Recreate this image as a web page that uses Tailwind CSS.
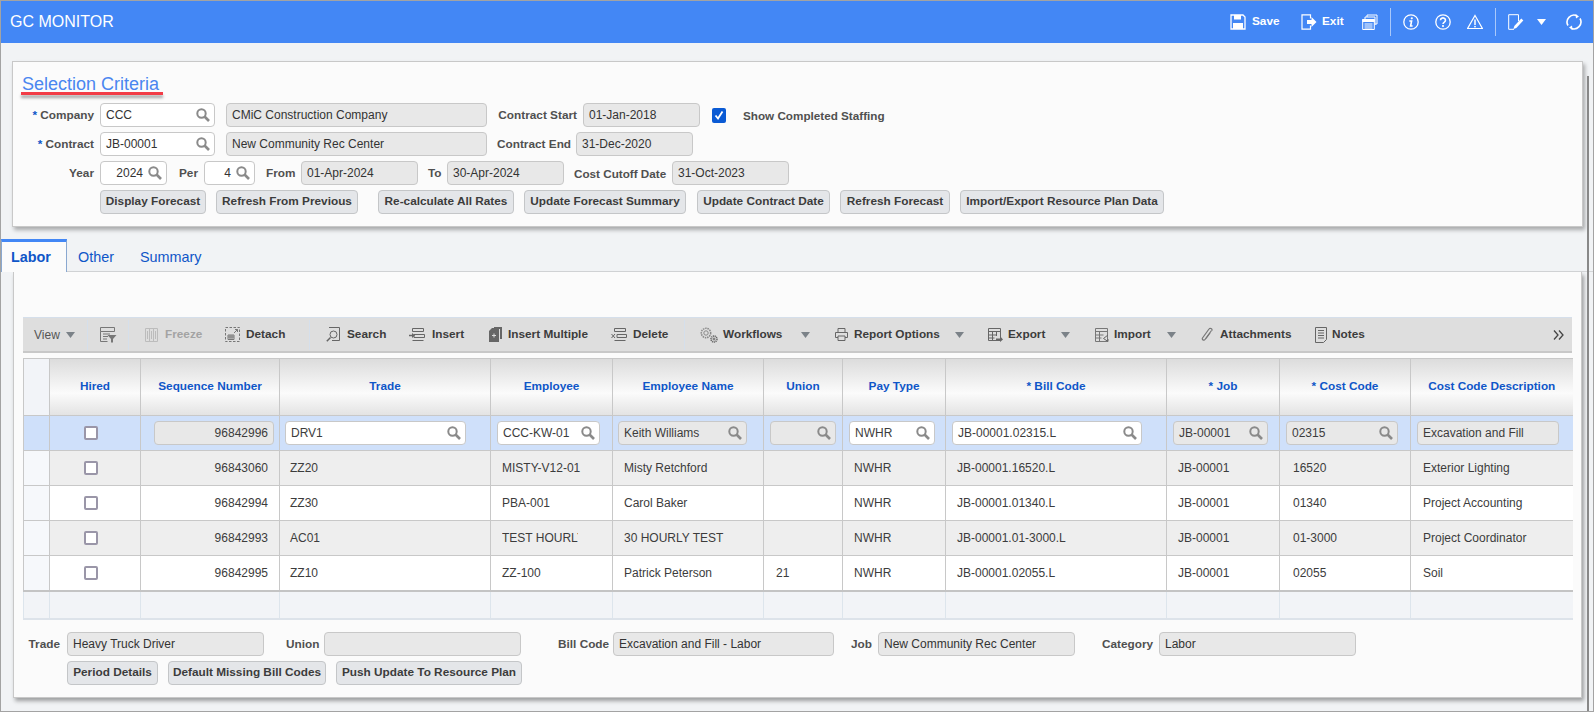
<!DOCTYPE html>
<html lang="en">
<head>
  <meta charset="UTF-8">
  <title>GC Monitor</title>
  <script src="https://cdn.jsdelivr.net/npm/@tailwindcss/browser@4"></script>
</head>
<body class="bg-[#f1f3f5]">
  <svg class="hidden">
    <symbol id="mag" viewBox="0 0 14 14"><circle cx="5.5" cy="5.5" r="4.2" fill="none" stroke="currentColor" stroke-width="2"/><path d="M8.500 8.500l4.500 4.500" stroke="currentColor" stroke-width="2.600"/></symbol>
    <symbol id="caret" viewBox="0 0 9 6"><path d="M0 0h9L4.500 6z" fill="currentColor"/></symbol>
  </svg>

  <div class="relative w-[1594px] h-[712px] overflow-hidden border border-[#a3a3a3] bg-[#f1f3f5] font-['Liberation_Sans',Arial,sans-serif] text-[12px] text-[#505050]">

    <!-- top bar -->
    <header class="flex items-center h-[42px] bg-[#4387f5] text-white pl-[9px] pr-[11px]">
      <h1 class="text-[16px]">GC MONITOR</h1>
      <div class="ml-auto flex items-center font-bold text-[11.8px]">
        <div class="flex items-center w-[71px]">
          <svg class="w-[16px] h-[16px] mr-[6px]" viewBox="0 0 16 16"><path d="M1 1h12l2 2v12H1z" fill="none" stroke="#fff" stroke-width="1.300"/><path d="M4 1h7v4.500H4z" fill="#fff"/><path d="M3 9h10v6H3z" fill="#fff"/></svg>
          <span>Save</span>
        </div>
        <div class="flex items-center w-[61px]">
          <svg class="w-[16px] h-[16px] mr-[5px]" viewBox="0 0 16 16"><path d="M9.500 4.500V.8H1v14.400h8.500v-3.700" fill="none" stroke="#fff" stroke-width="1.200"/><path d="M6 6h4.500V3l5 5-5 5v-3H6z" fill="#fff"/></svg>
          <span>Exit</span>
        </div>
        <div class="w-[28px]">
          <svg class="w-[16px] h-[16px]" viewBox="0 0 16 16" fill="none" stroke="#fff"><path d="M5 3V1h10v9h-2"/><path d="M3 5V3h10v8"/><path d="M.7 5.500h11.600v10H.7z" fill="#4387f5"/><path d="M.7 5.500h11.600v2H.7z" fill="#fff"/><path d="M2.500 10h8M2.500 12h8M2.500 14h8"/></svg>
        </div>
        <div class="w-[13px] h-[28px] border-l border-[#a9c8fa]"></div>
        <div class="w-[32px]">
          <svg class="w-[16px] h-[16px]" viewBox="0 0 16 16" fill="none" stroke="#fff"><circle cx="8" cy="8" r="7.200" stroke-width="1.300"/><circle cx="8.800" cy="4.300" r="1.100" fill="#fff" stroke="none"/><path d="M6.300 7h2.300l-1 5h2" stroke-width="1.600"/></svg>
        </div>
        <div class="w-[32px]">
          <svg class="w-[16px] h-[16px]" viewBox="0 0 16 16" fill="none" stroke="#fff"><circle cx="8" cy="8" r="7.200" stroke-width="1.300"/><path d="M5.500 6.200a2.500 2.300 0 1 1 3.900 1.900c-1 .6-1.400 1-1.400 2" stroke-width="1.600"/><circle cx="8" cy="12" r="1.100" fill="#fff" stroke="none"/></svg>
        </div>
        <div class="w-[28px]">
          <svg class="w-[16px] h-[16px]" viewBox="0 0 16 16" fill="none" stroke="#fff"><path d="M8 1.500l7.400 13H.6z" stroke-width="1.200"/><path d="M8 5.500v5.500" stroke-width="1.500"/><circle cx="8" cy="12.600" r=".9" fill="#fff" stroke="none"/></svg>
        </div>
        <div class="w-[13px] h-[28px] border-l border-[#a9c8fa]"></div>
        <div class="w-[29px]">
          <svg class="w-[16px] h-[16px]" viewBox="0 0 16 16" fill="none" stroke="#fff"><path d="M10.500 7V.7H.7v14.600h5.300"/><path d="M5.500 15l.8-3 7-7.500 2 2-7 7.500z" fill="#fff" stroke="none"/></svg>
        </div>
        <div class="w-[29px]"><svg class="w-[9px] h-[6px] text-white"><use href="#caret"/></svg></div>
        <svg class="w-[16px] h-[16px]" viewBox="0 0 16 16" fill="none" stroke="#fff" stroke-width="1.600"><path d="M2 11.500A7 7 0 0 1 11 1.700"/><path d="M14 4.500a7 7 0 0 1-9 9.800"/><path d="M9.500 0l3.500 2.500-3 2z" fill="#fff" stroke="none"/><path d="M6.500 16L3 13.500l3-2z" fill="#fff" stroke="none"/></svg>
      </div>
    </header>

    <!-- selection criteria -->
    <section class="mt-[18px] ml-[11px] w-[1571px] h-[166px] bg-[#fbfbfb] border border-[#c8c8c8] shadow-[2px_3px_4px_rgba(0,0,0,0.3)]">
      <div class="ml-[9px] mt-[12px] text-[18px] leading-[20px] text-[#4a86f0]">Selection Criteria</div>
      <div class="ml-[8px] -mt-[2px] w-[142px] h-[3px] bg-[#f23c46] shadow-[0_3px_3px_rgba(0,0,0,0.35)]"></div>

      <div class="flex items-center h-[24px] mt-[8px]">
        <label class="w-[81px] pt-[2px] text-right font-bold text-[11.8px] whitespace-nowrap"><span class="text-[#0f56c8]">*</span> Company</label>
        <div class="ml-[6px] w-[115px] h-[24px] flex items-center justify-between pl-[5px] pr-[4px] bg-white border border-[#c8c8c8] rounded-[4px] text-[#333]">CCC<svg class="w-[14px] h-[14px] text-[#8a8a8a]"><use href="#mag"/></svg></div>
        <div class="ml-[11px] w-[261px] h-[24px] flex items-center pl-[5px] bg-[#e8e8e8] border border-[#c8c8c8] rounded-[4px] text-[#333]">CMiC Construction Company</div>
        <label class="ml-[10px] w-[80px] pt-[2px] text-right font-bold text-[11.8px] whitespace-nowrap">Contract Start</label>
        <div class="ml-[6px] w-[117px] h-[24px] flex items-center pl-[5px] bg-[#e8e8e8] border border-[#c8c8c8] rounded-[4px] text-[#333]">01-Jan-2018</div>
        <div class="ml-[12px] w-[14px] h-[15px] flex items-center justify-center bg-[#0a5ad4] rounded-[2px]">
          <svg class="w-[10px] h-[10px]" viewBox="0 0 10 10" fill="none" stroke="#fff" stroke-width="1.800"><path d="M1.500 5.500l2.500 3L8.500 1.500"/></svg>
        </div>
        <label class="ml-[17px] pt-[2px] font-bold text-[11.7px] whitespace-nowrap">Show Completed Staffing</label>
      </div>

      <div class="flex items-center h-[24px] mt-[5px]">
        <label class="w-[81px] pt-[2px] text-right font-bold text-[11.8px] whitespace-nowrap"><span class="text-[#0f56c8]">*</span> Contract</label>
        <div class="ml-[6px] w-[115px] h-[24px] flex items-center justify-between pl-[5px] pr-[4px] bg-white border border-[#c8c8c8] rounded-[4px] text-[#333]">JB-00001<svg class="w-[14px] h-[14px] text-[#8a8a8a]"><use href="#mag"/></svg></div>
        <div class="ml-[11px] w-[261px] h-[24px] flex items-center pl-[5px] bg-[#e8e8e8] border border-[#c8c8c8] rounded-[4px] text-[#333]">New Community Rec Center</div>
        <label class="ml-[10px] w-[73px] pt-[2px] text-right font-bold text-[11.8px] whitespace-nowrap">Contract End</label>
        <div class="ml-[6px] w-[117px] h-[24px] flex items-center pl-[5px] bg-[#e8e8e8] border border-[#c8c8c8] rounded-[4px] text-[#333]">31-Dec-2020</div>
      </div>

      <div class="flex items-center h-[24px] mt-[5px]">
        <label class="w-[81px] pt-[2px] text-right font-bold text-[11.8px]">Year</label>
        <div class="ml-[6px] w-[67px] h-[24px] flex items-center justify-end pr-[4px] gap-[5px] bg-white border border-[#c8c8c8] rounded-[4px] text-[#333]">2024<svg class="w-[14px] h-[14px] text-[#8a8a8a]"><use href="#mag"/></svg></div>
        <label class="ml-[12px] w-[20px] pt-[2px] font-bold text-[11.8px]">Per</label>
        <div class="ml-[5px] w-[51px] h-[24px] flex items-center justify-end pr-[4px] gap-[5px] bg-white border border-[#c8c8c8] rounded-[4px] text-[#333]">4<svg class="w-[14px] h-[14px] text-[#8a8a8a]"><use href="#mag"/></svg></div>
        <label class="ml-[11px] w-[29px] pt-[2px] font-bold text-[11.8px]">From</label>
        <div class="ml-[6px] w-[117px] h-[24px] flex items-center pl-[5px] bg-[#e8e8e8] border border-[#c8c8c8] rounded-[4px] text-[#333]">01-Apr-2024</div>
        <label class="ml-[10px] w-[13px] pt-[2px] font-bold text-[11.8px]">To</label>
        <div class="ml-[6px] w-[117px] h-[24px] flex items-center pl-[5px] bg-[#e8e8e8] border border-[#c8c8c8] rounded-[4px] text-[#333]">30-Apr-2024</div>
        <label class="ml-[10px] w-[92px] pt-[2px] font-bold text-[11.7px] whitespace-nowrap">Cost Cutoff Date</label>
        <div class="ml-[6px] w-[117px] h-[24px] flex items-center pl-[5px] bg-[#e8e8e8] border border-[#c8c8c8] rounded-[4px] text-[#333]">31-Oct-2023</div>
      </div>

      <div class="flex items-center h-[24px] mt-[5px] ml-[87px] font-bold text-[11.8px] text-[#3c3c3c]">
        <button class="w-[106px] h-[24px] bg-[#e4e6e9] border border-[#c4c6c8] rounded-[4px]">Display Forecast</button>
        <button class="ml-[10px] w-[142px] h-[24px] bg-[#e4e6e9] border border-[#c4c6c8] rounded-[4px]">Refresh From Previous</button>
        <button class="ml-[20px] w-[136px] h-[24px] bg-[#e4e6e9] border border-[#c4c6c8] rounded-[4px]">Re-calculate All Rates</button>
        <button class="ml-[10px] w-[162px] h-[24px] bg-[#e4e6e9] border border-[#c4c6c8] rounded-[4px]">Update Forecast Summary</button>
        <button class="ml-[11px] w-[133px] h-[24px] bg-[#e4e6e9] border border-[#c4c6c8] rounded-[4px]">Update Contract Date</button>
        <button class="ml-[10px] w-[110px] h-[24px] bg-[#e4e6e9] border border-[#c4c6c8] rounded-[4px]">Refresh Forecast</button>
        <button class="ml-[10px] w-[204px] h-[24px] bg-[#e4e6e9] border border-[#c4c6c8] rounded-[4px]">Import/Export Resource Plan Data</button>
      </div>
    </section>

    <!-- tabs -->
    <nav class="mt-[12px] h-[33px] flex items-center text-[14.4px] text-[#0f56c8] border-b border-[#d4d6d8]">
      <a class="w-[66px] h-[33px] flex items-center pl-[9px] pt-[3px] font-bold bg-[#fbfbfb] border-t-[3px] border-t-[#4387f5] border-x border-x-[#8aa8d0]">Labor</a>
      <a class="ml-[11px] pt-[6px]">Other</a>
      <a class="ml-[26px] pt-[6px]">Summary</a>
    </nav>

    <!-- labor tab -->
    <section class="ml-[12px] w-[1569px] h-[426px] bg-[#fbfbfb] border border-t-0 border-[#c8c8c8] shadow-[2px_3px_4px_rgba(0,0,0,0.35)]">
      <div class="h-[45px]"></div>
      <div class="ml-[9px] w-[1549px] h-[36px] flex items-center bg-[#dedede] border-t border-t-[#d5dfeb] border-b-2 border-b-[#c8c8c8] pl-[11px] font-bold text-[11.8px] text-[#3c3c3c]">
        <div class="w-[53px] flex items-center font-normal text-[12px] text-[#555]"><span class="w-[32px]">View</span><svg class="w-[9px] h-[6px] text-[#7b8288]"><use href="#caret"/></svg></div>
        <div class="w-[13px] h-[30px] border-l border-[#d5dfeb]"></div>
        <div class="w-[28px]"><svg class="w-[17px] h-[16px]" viewBox="0 0 17 16" fill="none" stroke="#777"><path d="M.5.500h14v4H.5zM.5 4.500v10h7M3 7h7M3 9.500h5M3 12h4"/><path d="M7.500 8h9l-3.500 4v3.500h-2V12z" fill="#777" stroke="none"/></svg></div>
        <div class="w-[17px] h-[30px] border-l border-[#d5dfeb]"></div>
        <div class="w-[80px] flex items-center text-[#a3a3a3]"><span class="w-[20px]"><svg class="w-[13px] h-[14px] block" viewBox="0 0 13 14" fill="none" stroke="#bcbcbc"><path d="M.5.500h12v13H.5zM4.500.500v13M8.500.500v13M2.500 3v8M6.500 3v8M10.500 3v8"/></svg></span>Freeze</div>
        <div class="w-[84px] flex items-center"><span class="w-[21px]"><svg class="w-[15px] h-[15px] block" viewBox="0 0 15 15" fill="none" stroke="#777"><path d="M.5.500h14v14H.5z" stroke-dasharray="2.500 1.500"/><path d="M3 8h6v4.500H3zM5 8v4.500M7 8v4.500M3 10h6"/><path d="M9 6l3.500-3.500M10 2.500h2.500V5"/></svg></span>Detach</div>
        <div class="w-[17px] h-[30px] border-l border-[#d5dfeb]"></div>
        <div class="w-[83px] flex items-center"><span class="w-[21px]"><svg class="w-[14px] h-[15px] block" viewBox="0 0 14 15" fill="none" stroke="#666"><path d="M3 .5h10.500v13H6"/><circle cx="7.500" cy="7.500" r="3.500"/><path d="M4.500 10.500L.8 14.200" stroke-width="1.500"/></svg></span>Search</div>
        <div class="w-[80px] flex items-center"><span class="w-[23px]"><svg class="w-[16px] h-[13px] block" viewBox="0 0 16 13" fill="none" stroke="#666"><path d="M3.500.500h11v3h-11zM5 6.500h10.500v3H5zM3.500 12.500h11"/><path d="M0 7.500h4" stroke-width="1.500"/><path d="M3 5l3 2.500L3 10z" fill="#666" stroke="none"/></svg></span>Insert</div>
        <div class="w-[122px] flex items-center"><span class="w-[19px]"><svg class="w-[13px] h-[15px] block" viewBox="0 0 13 15"><path d="M5 0h8v12h-2V2H5z" fill="#666"/><path d="M0 4l3-3h7v14H0z" fill="#666"/><path d="M3 8.500h4M5 6.500v4" stroke="#ddd"/></svg></span>Insert Multiple</div>
        <div class="w-[73px] flex items-center"><span class="w-[22px]"><svg class="w-[16px] h-[13px] block" viewBox="0 0 16 13" fill="none" stroke="#666"><path d="M3.500.500h11v3h-11zM6 6.500h9.500v3H6zM3.500 12.500h11"/><path d="M.5 6l3.500 4M4 6l-3.500 4"/></svg></span>Delete</div>
        <div class="w-[16px] h-[30px] border-l border-[#d5dfeb]"></div>
        <div class="w-[135px] flex items-center"><span class="w-[23px]"><svg class="w-[18px] h-[16px] block" viewBox="0 0 18 16" fill="none" stroke="#888"><circle cx="6" cy="6" r="4.700" stroke-dasharray="1.500 .8" stroke-width="1.500"/><circle cx="6" cy="6" r="2.200"/><circle cx="14" cy="12" r="3" stroke="#666" stroke-dasharray="1.200 .6" stroke-width="1.500"/><circle cx="14" cy="12" r="1" stroke="#666"/></svg></span><span class="w-[78px]">Workflows</span><svg class="w-[9px] h-[6px] text-[#7b8288]"><use href="#caret"/></svg></div>
        <div class="w-[153px] flex items-center"><span class="w-[19px]"><svg class="w-[13px] h-[13px] block" viewBox="0 0 13 13" fill="none" stroke="#666"><path d="M3 4V.5h7V4"/><path d="M.5 4.500h12v5H.5z"/><path d="M3 8h7v4.500H3z" fill="#dedede"/></svg></span><span class="w-[101px]">Report Options</span><svg class="w-[9px] h-[6px] text-[#7b8288]"><use href="#caret"/></svg></div>
        <div class="w-[107px] flex items-center"><span class="w-[20px]"><svg class="w-[15px] h-[14px] block" viewBox="0 0 15 14" fill="none" stroke="#666"><path d="M.5.500h12v12H.5zM.5 3.500h12M.5 7h8M.5 10h6M4.500 3.500v9M8.500 3.500V8"/><path d="M8 10.500h4V8l3 3.500-3 2.500v-1.500H8z" fill="#666" stroke="none"/></svg></span><span class="w-[53px]">Export</span><svg class="w-[9px] h-[6px] text-[#7b8288]"><use href="#caret"/></svg></div>
        <div class="w-[106px] flex items-center"><span class="w-[19px]"><svg class="w-[14px] h-[14px] block" viewBox="0 0 14 14" fill="none" stroke="#777"><path d="M.5.500h12v13H.5zM.5 3.500h12M.5 7h8M.5 10h6M4.500 3.500v10"/><path d="M13 7l-4.500 3.500L13 13.500V11" stroke="#666"/></svg></span><span class="w-[53px]">Import</span><svg class="w-[9px] h-[6px] text-[#7b8288]"><use href="#caret"/></svg></div>
        <div class="w-[114px] flex items-center"><span class="w-[19px]"><svg class="w-[12px] h-[16px] block" viewBox="0 0 12 16" fill="none" stroke="#777" stroke-width="1.200"><path d="M10.500 3.500L4 12.500c-1 1.500-3.500 0-2.500-1.500l6.500-9c1-1.500 3.500-.2 3 1.500"/><path d="M9 6l-4 5.500"/></svg></span>Attachments</div>
        <div class="flex items-center"><span class="w-[17px]"><svg class="w-[12px] h-[16px] block" viewBox="0 0 12 16" fill="none" stroke="#666"><path d="M.5.500h11v12l-3 3h-8zM3 3.500h6M3 6h6M3 8.500h6M3 11h6"/></svg></span>Notes</div>
        <svg class="ml-auto mr-[8px] w-[11px] h-[10px]" viewBox="0 0 11 10" fill="none" stroke="#444" stroke-width="1.300"><path d="M1 .5L5 5 1 9.500M6 .5L10 5 6 9.500"/></svg>
      </div>

      <table class="ml-[9px] mt-[5px] w-[1549px] table-fixed border-collapse text-[#3c3c3c]">
        <colgroup>
          <col class="w-[26px]"><col class="w-[91px]"><col class="w-[139px]"><col class="w-[211px]"><col class="w-[122px]"><col class="w-[151px]"><col class="w-[79px]"><col class="w-[103px]"><col class="w-[221px]"><col class="w-[113px]"><col class="w-[131px]"><col class="w-[162px]">
        </colgroup>
        <thead>
          <tr class="h-[57px] font-bold text-[11.8px] text-[#0f56c8] bg-linear-to-b from-[#dcdcdc] via-[#fbfbfb] via-60% to-[#e2e2e2]">
            <th class="border border-[#c8c8c8] bg-[#f2f4f8]"></th>
            <th class="border border-[#c8c8c8]">Hired</th>
            <th class="border border-[#c8c8c8]">Sequence Number</th>
            <th class="border border-[#c8c8c8]">Trade</th>
            <th class="border border-[#c8c8c8]">Employee</th>
            <th class="border border-[#c8c8c8]">Employee Name</th>
            <th class="border border-[#c8c8c8]">Union</th>
            <th class="border border-[#c8c8c8]">Pay Type</th>
            <th class="border border-[#c8c8c8]">* Bill Code</th>
            <th class="border border-[#c8c8c8]">* Job</th>
            <th class="border border-[#c8c8c8]">* Cost Code</th>
            <th class="border border-[#c8c8c8] border-r-0">Cost Code Description</th>
          </tr>
        </thead>
        <tbody>
          <tr class="h-[35px] bg-[#cfe0fa]">
            <td class="border border-[#c8c8c8]"></td>
            <td class="border border-[#c8c8c8] pl-[34px]"><div class="w-[14px] h-[14px] bg-white border-2 border-[#9a96a8] rounded-[2px]"></div></td>
            <td class="border border-[#c8c8c8] pl-[13px]"><div class="w-[120px] h-[24px] flex items-center justify-end pr-[5px] bg-[#e8e8e8] border border-[#c8c8c8] rounded-[4px]">96842996</div></td>
            <td class="border border-[#c8c8c8] pl-[5px]"><div class="w-[181px] h-[24px] flex items-center justify-between pl-[5px] pr-[4px] bg-white border border-[#c8c8c8] rounded-[4px]">DRV1<svg class="w-[14px] h-[14px] text-[#8a8a8a]"><use href="#mag"/></svg></div></td>
            <td class="border border-[#c8c8c8] pl-[6px]"><div class="w-[103px] h-[24px] flex items-center justify-between pl-[5px] pr-[4px] bg-white border border-[#c8c8c8] rounded-[4px]">CCC-KW-01<svg class="w-[14px] h-[14px] text-[#8a8a8a]"><use href="#mag"/></svg></div></td>
            <td class="border border-[#c8c8c8] pl-[5px]"><div class="w-[129px] h-[24px] flex items-center justify-between pl-[5px] pr-[4px] bg-[#e8e8e8] border border-[#c8c8c8] rounded-[4px]">Keith Williams<svg class="w-[14px] h-[14px] text-[#8a8a8a]"><use href="#mag"/></svg></div></td>
            <td class="border border-[#c8c8c8] pl-[6px]"><div class="w-[66px] h-[24px] flex items-center justify-end pr-[4px] bg-[#e8e8e8] border border-[#c8c8c8] rounded-[4px]"><svg class="w-[14px] h-[14px] text-[#8a8a8a]"><use href="#mag"/></svg></div></td>
            <td class="border border-[#c8c8c8] pl-[6px]"><div class="w-[86px] h-[24px] flex items-center justify-between pl-[5px] pr-[4px] bg-white border border-[#c8c8c8] rounded-[4px]">NWHR<svg class="w-[14px] h-[14px] text-[#8a8a8a]"><use href="#mag"/></svg></div></td>
            <td class="border border-[#c8c8c8] pl-[6px]"><div class="w-[190px] h-[24px] flex items-center justify-between pl-[5px] pr-[4px] bg-white border border-[#c8c8c8] rounded-[4px]">JB-00001.02315.L<svg class="w-[14px] h-[14px] text-[#8a8a8a]"><use href="#mag"/></svg></div></td>
            <td class="border border-[#c8c8c8] pl-[6px]"><div class="w-[95px] h-[24px] flex items-center justify-between pl-[5px] pr-[4px] bg-[#e8e8e8] border border-[#c8c8c8] rounded-[4px]">JB-00001<svg class="w-[14px] h-[14px] text-[#8a8a8a]"><use href="#mag"/></svg></div></td>
            <td class="border border-[#c8c8c8] pl-[6px]"><div class="w-[112px] h-[24px] flex items-center justify-between pl-[5px] pr-[4px] bg-[#e8e8e8] border border-[#c8c8c8] rounded-[4px]">02315<svg class="w-[14px] h-[14px] text-[#8a8a8a]"><use href="#mag"/></svg></div></td>
            <td class="border border-[#c8c8c8] border-r-0 pl-[6px]"><div class="w-[142px] h-[24px] flex items-center pl-[5px] bg-[#e8e8e8] border border-[#c8c8c8] rounded-[4px]">Excavation and Fill</div></td>
          </tr>
          <tr class="h-[35px] bg-[#eeeeee]">
            <td class="border border-[#c8c8c8] bg-[#f6f8fb]"></td>
            <td class="border border-[#c8c8c8] pl-[34px]"><div class="w-[14px] h-[14px] bg-white border-2 border-[#9a96a8] rounded-[2px]"></div></td>
            <td class="border border-[#c8c8c8] text-right pr-[11px]">96843060</td>
            <td class="border border-[#c8c8c8] pl-[10px]">ZZ20</td>
            <td class="border border-[#c8c8c8] pl-[11px]">MISTY-V12-01</td>
            <td class="border border-[#c8c8c8] pl-[11px]">Misty Retchford</td>
            <td class="border border-[#c8c8c8] pl-[12px]"></td>
            <td class="border border-[#c8c8c8] pl-[11px]">NWHR</td>
            <td class="border border-[#c8c8c8] pl-[11px]">JB-00001.16520.L</td>
            <td class="border border-[#c8c8c8] pl-[11px]">JB-00001</td>
            <td class="border border-[#c8c8c8] pl-[13px]">16520</td>
            <td class="border border-[#c8c8c8] border-r-0 pl-[12px]">Exterior Lighting</td>
          </tr>
          <tr class="h-[35px] bg-white">
            <td class="border border-[#c8c8c8] bg-[#f6f8fb]"></td>
            <td class="border border-[#c8c8c8] pl-[34px]"><div class="w-[14px] h-[14px] bg-white border-2 border-[#9a96a8] rounded-[2px]"></div></td>
            <td class="border border-[#c8c8c8] text-right pr-[11px]">96842994</td>
            <td class="border border-[#c8c8c8] pl-[10px]">ZZ30</td>
            <td class="border border-[#c8c8c8] pl-[11px]">PBA-001</td>
            <td class="border border-[#c8c8c8] pl-[11px]">Carol Baker</td>
            <td class="border border-[#c8c8c8] pl-[12px]"></td>
            <td class="border border-[#c8c8c8] pl-[11px]">NWHR</td>
            <td class="border border-[#c8c8c8] pl-[11px]">JB-00001.01340.L</td>
            <td class="border border-[#c8c8c8] pl-[11px]">JB-00001</td>
            <td class="border border-[#c8c8c8] pl-[13px]">01340</td>
            <td class="border border-[#c8c8c8] border-r-0 pl-[12px]">Project Accounting</td>
          </tr>
          <tr class="h-[35px] bg-[#eeeeee]">
            <td class="border border-[#c8c8c8] bg-[#f6f8fb]"></td>
            <td class="border border-[#c8c8c8] pl-[34px]"><div class="w-[14px] h-[14px] bg-white border-2 border-[#9a96a8] rounded-[2px]"></div></td>
            <td class="border border-[#c8c8c8] text-right pr-[11px]">96842993</td>
            <td class="border border-[#c8c8c8] pl-[10px]">AC01</td>
            <td class="border border-[#c8c8c8] pl-[11px]"><div class="w-[76px] overflow-hidden whitespace-nowrap">TEST HOURLY</div></td>
            <td class="border border-[#c8c8c8] pl-[11px]">30 HOURLY TEST</td>
            <td class="border border-[#c8c8c8] pl-[12px]"></td>
            <td class="border border-[#c8c8c8] pl-[11px]">NWHR</td>
            <td class="border border-[#c8c8c8] pl-[11px]">JB-00001.01-3000.L</td>
            <td class="border border-[#c8c8c8] pl-[11px]">JB-00001</td>
            <td class="border border-[#c8c8c8] pl-[13px]">01-3000</td>
            <td class="border border-[#c8c8c8] border-r-0 pl-[12px]">Project Coordinator</td>
          </tr>
          <tr class="h-[35px] bg-white">
            <td class="border border-[#c8c8c8] bg-[#f6f8fb]"></td>
            <td class="border border-[#c8c8c8] pl-[34px]"><div class="w-[14px] h-[14px] bg-white border-2 border-[#9a96a8] rounded-[2px]"></div></td>
            <td class="border border-[#c8c8c8] text-right pr-[11px]">96842995</td>
            <td class="border border-[#c8c8c8] pl-[10px]">ZZ10</td>
            <td class="border border-[#c8c8c8] pl-[11px]">ZZ-100</td>
            <td class="border border-[#c8c8c8] pl-[11px]">Patrick Peterson</td>
            <td class="border border-[#c8c8c8] pl-[12px]">21</td>
            <td class="border border-[#c8c8c8] pl-[11px]">NWHR</td>
            <td class="border border-[#c8c8c8] pl-[11px]">JB-00001.02055.L</td>
            <td class="border border-[#c8c8c8] pl-[11px]">JB-00001</td>
            <td class="border border-[#c8c8c8] pl-[13px]">02055</td>
            <td class="border border-[#c8c8c8] border-r-0 pl-[12px]">Soil</td>
          </tr>
          <tr class="h-[28px] bg-[#f2f4f7] border-t-2 border-t-[#c4c4c4] border-b-2 border-b-[#dde3ea]">
            <td class="border-x border-[#dde5ec]"></td><td class="border-x border-[#dde5ec]"></td><td class="border-x border-[#dde5ec]"></td><td class="border-x border-[#dde5ec]"></td><td class="border-x border-[#dde5ec]"></td><td class="border-x border-[#dde5ec]"></td><td class="border-x border-[#dde5ec]"></td><td class="border-x border-[#dde5ec]"></td><td class="border-x border-[#dde5ec]"></td><td class="border-x border-[#dde5ec]"></td><td class="border-x border-[#dde5ec]"></td><td class="border-l border-[#dde5ec]"></td>
          </tr>
        </tbody>
      </table>

      <!-- bottom detail fields -->
      <div class="flex items-center h-[24px] mt-[12px]">
        <label class="w-[46px] pt-[2px] text-right font-bold text-[11.8px]">Trade</label>
        <div class="ml-[7px] w-[197px] h-[24px] flex items-center pl-[5px] bg-[#e8e8e8] border border-[#c8c8c8] rounded-[4px] text-[#333]">Heavy Truck Driver</div>
        <label class="ml-[22px] w-[32px] pt-[2px] font-bold text-[11.8px]">Union</label>
        <div class="ml-[6px] w-[197px] h-[24px] bg-[#e8e8e8] border border-[#c8c8c8] rounded-[4px]"></div>
        <label class="ml-[37px] w-[49px] pt-[2px] font-bold text-[11.8px] whitespace-nowrap">Bill Code</label>
        <div class="ml-[6px] w-[221px] h-[24px] flex items-center pl-[5px] bg-[#e8e8e8] border border-[#c8c8c8] rounded-[4px] text-[#333]">Excavation and Fill - Labor</div>
        <label class="ml-[17px] w-[21px] pt-[2px] font-bold text-[11.8px]">Job</label>
        <div class="ml-[6px] w-[197px] h-[24px] flex items-center pl-[5px] bg-[#e8e8e8] border border-[#c8c8c8] rounded-[4px] text-[#333]">New Community Rec Center</div>
        <label class="ml-[27px] w-[51px] pt-[2px] font-bold text-[11.8px]">Category</label>
        <div class="ml-[6px] w-[197px] h-[24px] flex items-center pl-[5px] bg-[#e8e8e8] border border-[#c8c8c8] rounded-[4px] text-[#333]">Labor</div>
      </div>
      <div class="flex items-center h-[24px] mt-[5px] ml-[53px] font-bold text-[11.8px] text-[#3c3c3c]">
        <button class="w-[91px] h-[24px] bg-[#e4e6e9] border border-[#c4c6c8] rounded-[4px]">Period Details</button>
        <button class="ml-[10px] w-[158px] h-[24px] bg-[#e4e6e9] border border-[#c4c6c8] rounded-[4px]">Default Missing Bill Codes</button>
        <button class="ml-[10px] w-[186px] h-[24px] bg-[#e4e6e9] border border-[#c4c6c8] rounded-[4px]">Push Update To Resource Plan</button>
      </div>
    </section>

    <!-- page scrollbar -->
    <div class="absolute left-[1586px] top-[75px] bottom-0 w-[2px] bg-[#888]"></div>
  </div>
</body>
</html>
